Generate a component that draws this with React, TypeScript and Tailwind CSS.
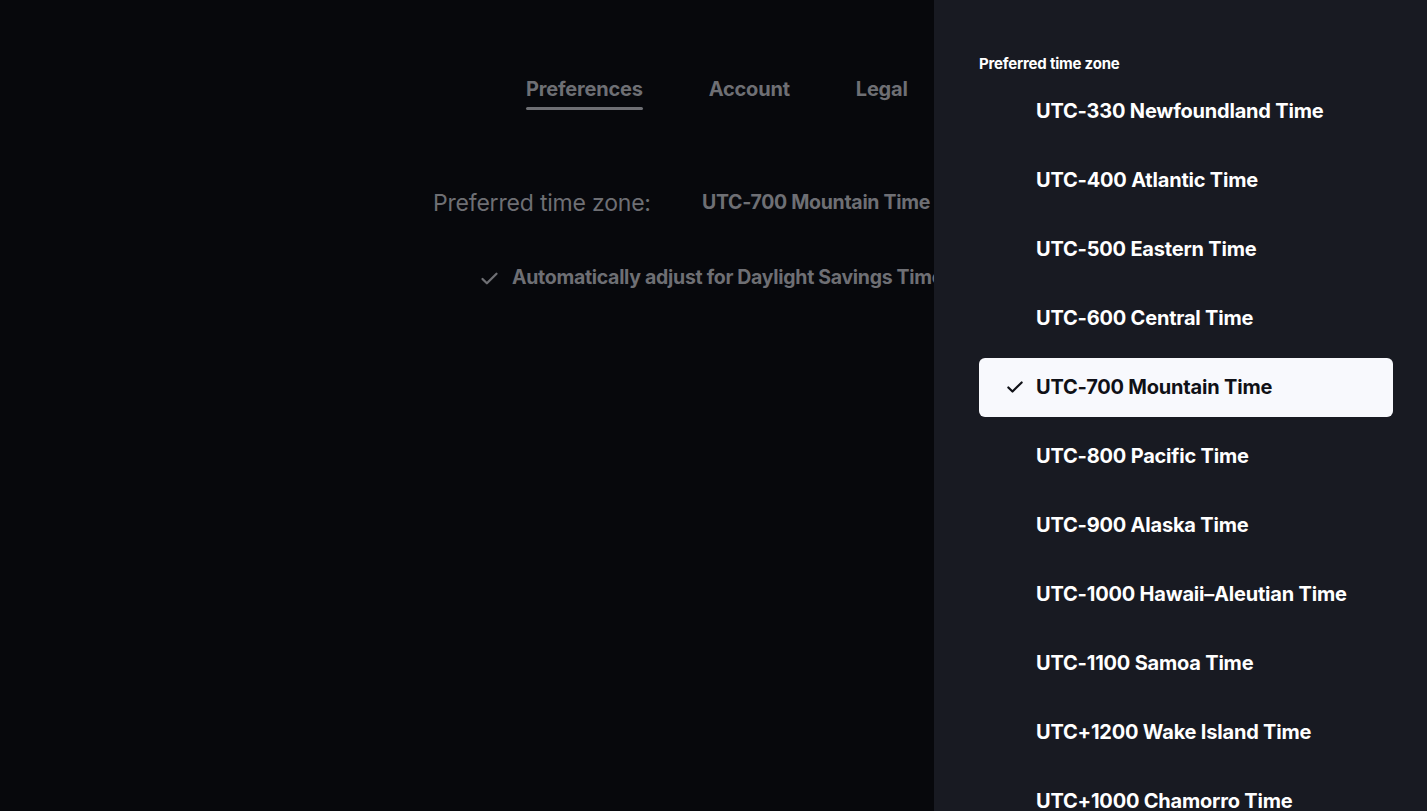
import React from 'react';

const zones = [
  'UTC-330 Newfoundland Time',
  'UTC-400 Atlantic Time',
  'UTC-500 Eastern Time',
  'UTC-600 Central Time',
  'UTC-700 Mountain Time',
  'UTC-800 Pacific Time',
  'UTC-900 Alaska Time',
  'UTC-1000 Hawaii–Aleutian Time',
  'UTC-1100 Samoa Time',
  'UTC+1200 Wake Island Time',
  'UTC+1000 Chamorro Time',
];

const selected = 'UTC-700 Mountain Time';

function Check({ className }: { className?: string }) {
  return (
    <svg viewBox="0 0 24 24" fill="none" stroke="currentColor" strokeWidth="2.6" strokeLinecap="round" strokeLinejoin="round" className={className}>
      <path d="M4 12.5l5 5L20 6.5" />
    </svg>
  );
}

export default function App() {
  return (
    <div
      className="relative w-full h-[811px] overflow-hidden bg-[#07080c]"
      style={{ fontFamily: 'Inter, "Noto Sans", sans-serif' }}
    >
      {/* Settings page (dimmed behind the drawer) */}
      <div className="flex flex-col items-start pt-[76px] text-[#6e6f74]">
        <div className="flex gap-[66px] ml-[526px] text-[20px] font-bold tracking-[-0.2px]">
          <div className="flex flex-col">
            <span className="leading-[26px]">Preferences</span>
            <div className="h-[3px] mt-[5px] bg-[#6e6f74] rounded-full" />
          </div>
          <span className="leading-[26px]">Account</span>
          <span className="leading-[26px]">Legal</span>
        </div>

        <div className="flex items-center mt-[78px] ml-[433px] h-[30px]">
          <span className="w-[269px] text-[23px] tracking-[-0.2px]">Preferred time zone:</span>
          <span className="text-[19.5px] font-bold tracking-[-0.3px] whitespace-nowrap">UTC-700 Mountain Time</span>
        </div>

        <div className="flex items-center mt-[45px] ml-[479px] gap-[12px] h-[30px]">
          <Check className="w-[21px] h-[21px]" />
          <span className="text-[19.5px] font-bold tracking-[-0.3px] whitespace-nowrap">
            Automatically adjust for Daylight Savings Time
          </span>
        </div>
      </div>

      {/* Time zone drawer */}
      <div className="absolute top-0 right-0 h-full w-[493px] bg-[#181a22] pl-[45px] pr-[34px] pt-[53px]">
        <div className="text-[15px] font-bold text-white tracking-[-0.2px]">Preferred time zone</div>
        <div className="flex flex-col gap-[10px] mt-[6px]">
          {zones.map((z) => {
            const isSel = z === selected;
            return (
              <div
                key={z}
                className={`flex items-center h-[59px] rounded-[6px] ${isSel ? 'bg-[#f8f9fd] text-[#101117]' : 'text-white'}`}
              >
                <div className="w-[57px] flex justify-end pr-[11px]">
                  {isSel && <Check className="w-[20px] h-[20px]" />}
                </div>
                <span className="text-[20px] font-bold tracking-[-0.2px] whitespace-nowrap">{z}</span>
              </div>
            );
          })}
        </div>
      </div>
    </div>
  );
}
